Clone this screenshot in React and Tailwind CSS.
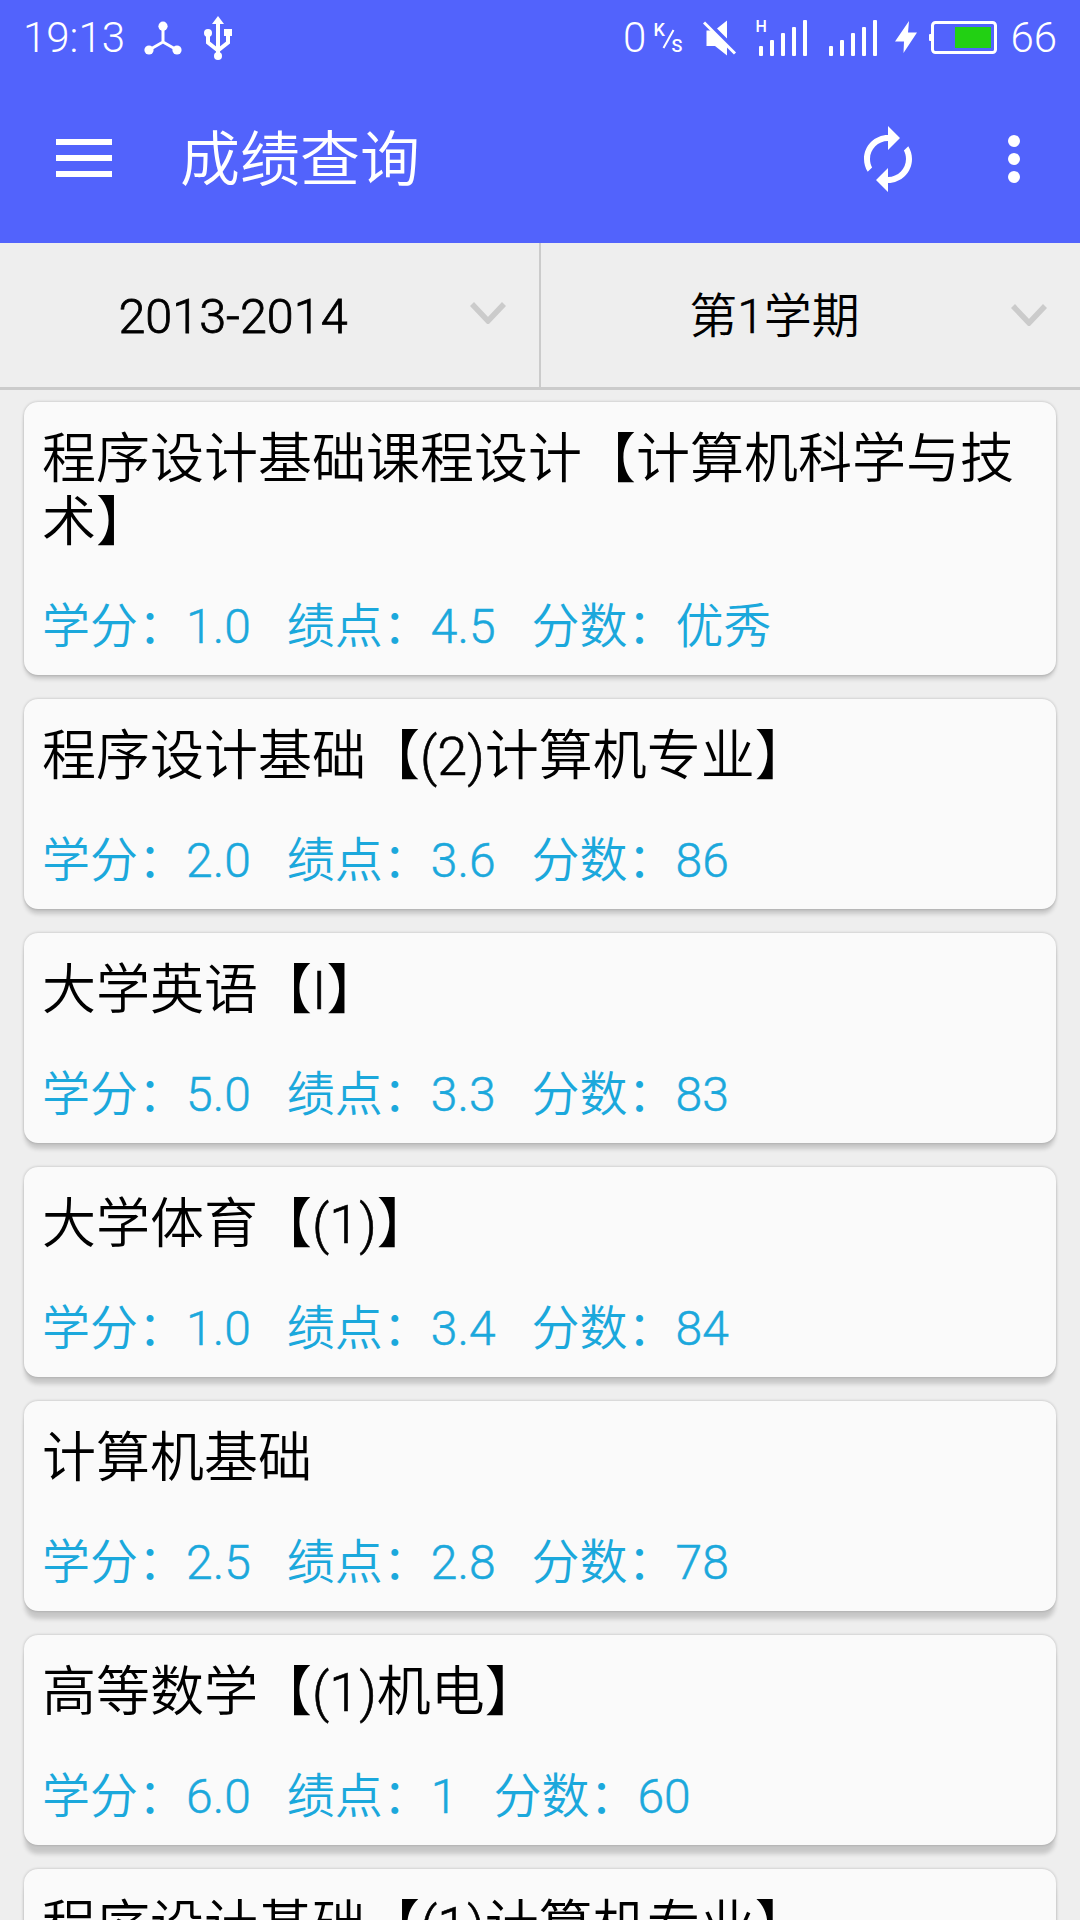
const courses = [
  { name: '程序设计基础课程设计【计算机科学与技术】', credit: '1.0', point: '4.5', score: '优秀' },
  { name: '程序设计基础【(2)计算机专业】', credit: '2.0', point: '3.6', score: '86' },
  { name: '大学英语【I】', credit: '5.0', point: '3.3', score: '83' },
  { name: '大学体育【(1)】', credit: '1.0', point: '3.4', score: '84' },
  { name: '计算机基础', credit: '2.5', point: '2.8', score: '78' },
  { name: '高等数学【(1)机电】', credit: '6.0', point: '1', score: '60' },
  { name: '程序设计基础【(1)计算机专业】' },
];

function Molecule() {
  return (
    <svg className="ml-[22px] h-[34px] w-[38px]" viewBox="0 0 38 34" fill="white">
      <path d="M19 5v16L5 29M19 21l14 8" fill="none" stroke="white" strokeWidth="3" />
      <circle cx="19" cy="5.2" r="4.6" />
      <circle cx="5" cy="29" r="4.6" />
      <circle cx="33" cy="29" r="4.6" />
    </svg>
  );
}

function Usb() {
  return (
    <svg className="ml-[22px] h-[44px] w-[28px]" viewBox="0 0 28 44" fill="white">
      <path d="M14 0l6 8H8z" />
      <path d="M14 6v32M4 17v9.500l10 8M24 17v9.500l-10 8" fill="none" stroke="white" strokeWidth="4" />
      <circle cx="4" cy="17" r="4" />
      <rect x="20" y="13" width="8" height="7" />
      <circle cx="14" cy="40" r="4" />
    </svg>
  );
}

function Muted() {
  return (
    <svg className="ml-[20px] h-[36px] w-[34px]" viewBox="0 0 34 36" fill="white">
      <path d="M3.500 10.500h5.500L24 25.500V35.500L12 26H3.500V10.500zM14 8.500L24 0.500V18.500z" />
      <path d="M1 2.500L32 33.500" stroke="white" strokeWidth="3" />
    </svg>
  );
}

function Signal({ className }) {
  return (
    <svg className={className} viewBox="0 0 48 36" fill="white">
      <rect x="0" y="26" width="4" height="10" rx="1" />
      <rect x="11" y="20" width="4" height="16" rx="1" />
      <rect x="22" y="13" width="4" height="23" rx="1" />
      <rect x="33" y="7" width="4" height="29" rx="1" />
      <rect x="44" y="0" width="4" height="36" rx="1" />
    </svg>
  );
}

function StatusBar() {
  return (
    <div className="flex h-[75px] items-center pl-[23px] pr-[23px] text-[42px] font-light leading-none">
      <span className="w-[99px] whitespace-nowrap">19:13</span>
      <Molecule />
      <Usb />
      <span className="ml-auto">0</span>
      <div className="relative ml-[7px] h-[36px] w-[30px] text-[18px] font-medium leading-none">
        <span className="absolute left-0 top-[1px]">K</span>
        <svg className="absolute left-[9px] top-[9px] h-[20px] w-[13px]" viewBox="0 0 13 20">
          <path d="M1.500 19L11.500 1" stroke="white" strokeWidth="2" />
        </svg>
        <span className="absolute left-[18px] top-[17px]">S</span>
      </div>
      <Muted />
      <div className="relative ml-[22px] h-[36px] w-[48px]">
        <span className="absolute -left-[4px] -top-[1px] text-[16px] font-medium leading-none">H</span>
        <Signal className="h-[36px] w-[48px]" />
      </div>
      <Signal className="ml-[22px] h-[36px] w-[48px]" />
      <svg className="ml-[18px] h-[33px] w-[22px]" viewBox="0 0 22 33" fill="white">
        <path d="M14 0L0 20.500h9L8.500 32 22 11.500h-9z" />
      </svg>
      <svg className="ml-[12px] h-[34px] w-[68px]" viewBox="0 0 68 34">
        <rect x="3.500" y="1.500" width="63" height="30" rx="3" fill="none" stroke="white" strokeWidth="3" />
        <rect x="0" y="13" width="3" height="7" rx="1" fill="white" />
        <rect x="26" y="6" width="36" height="21" fill="#22d013" />
      </svg>
      <span className="ml-[13px]">66</span>
    </div>
  );
}

function AppBar() {
  return (
    <div className="flex h-[168px] items-center pl-[56px] pr-[30px]">
      <div className="mb-[2px] flex w-[56px] flex-col gap-[10px]">
        <i className="h-[6px] bg-white" />
        <i className="h-[6px] bg-white" />
        <i className="h-[6px] bg-white" />
      </div>
      <h1 className="ml-[68px] flex-1 pt-[3px] text-[60px] font-[350] leading-[70px]">成绩查询</h1>
      <svg className="size-[72px]" viewBox="0 0 24 24" fill="white">
        <path d="M12 6v3l4-4-4-4v3c-4.420 0-8 3.580-8 8 0 1.570.46 3.030 1.240 4.260L6.700 14.800c-.45-.83-.7-1.790-.7-2.800 0-3.310 2.690-6 6-6zm6.760 1.740L17.300 9.200c.44.84.7 1.790.7 2.800 0 3.310-2.690 6-6 6v-3l-4 4 4 4v-3c4.420 0 8-3.580 8-8 0-1.570-.46-3.030-1.240-4.260z" />
      </svg>
      <svg className="ml-[54px] size-[72px]" viewBox="0 0 24 24" fill="white">
        <circle cx="12" cy="6" r="2" />
        <circle cx="12" cy="12" r="2" />
        <circle cx="12" cy="18" r="2" />
      </svg>
    </div>
  );
}

function Chevron({ className }) {
  return (
    <svg className={className} viewBox="0 0 36 22">
      <path d="M2 2l16 17L34 2" fill="none" stroke="#cbcbcb" strokeWidth="5.500" />
    </svg>
  );
}

function Filters() {
  return (
    <div className="flex h-[147px] border-b-[3px] border-[#cbcbcb] text-[48px] font-[350] leading-[56px] text-black">
      <div className="flex w-[541px] items-center border-r-2 border-[#cbcbcb] pr-[33px]">
        <span className="flex-1 pr-[4px] pt-[3px] text-center text-[48.5px] [-webkit-text-stroke:0.8px]">2013-2014</span>
        <Chevron className="mb-[4px] h-[22px] w-[36px]" />
      </div>
      <div className="flex flex-1 items-center pr-[33px]">
        <span className="flex-1 pr-[3px] pt-[3px] text-center">
          第<span className="[-webkit-text-stroke:0.6px]">1</span>学期
        </span>
        <Chevron className="h-[22px] w-[36px]" />
      </div>
    </div>
  );
}

function Stat({ label, value }) {
  const numeric = /^[\d.]+$/.test(value);
  return (
    <span>
      {label}：<span className={numeric ? '[-webkit-text-stroke:0.5px]' : ''}>{value}</span>
    </span>
  );
}

function CourseCard({ course, index }) {
  const drop = 5 + index;
  return (
    <li
      className="shrink-0 rounded-[14px] bg-[#fafafa] px-[18px] pb-[20px] pt-[26px]"
      style={{ boxShadow: `0 ${drop}px 4px -1px rgba(0,0,0,0.16), 0 0 3px rgba(0,0,0,0.24)` }}
    >
      <h2 className="text-[54px] font-[350] leading-[63px] text-black">
        {course.name.split(/([()\dI]+)/).map((part, i) => (
          <span key={i} className={i % 2 ? '[-webkit-text-stroke:0.6px]' : ''}>{part}</span>
        ))}
      </h2>
      {course.credit && (
        <div className="mt-[45px] flex gap-[36px] whitespace-pre text-[48px] font-[350] leading-[56px] text-[#1ba8dc]">
          <Stat label="学分" value={course.credit} />
          <Stat label="绩点" value={course.point} />
          <Stat label="分数" value={course.score} />
        </div>
      )}
    </li>
  );
}

export default function App() {
  return (
    <div className="flex h-[1920px] w-[1080px] flex-col overflow-hidden bg-[#eeeeee] font-['Roboto','Noto_Sans_CJK_SC',sans-serif]">
      <header className="bg-[#5263fc] text-white">
        <StatusBar />
        <AppBar />
      </header>
      <Filters />
      <ul className="flex flex-1 flex-col gap-[24px] overflow-hidden px-[24px] pt-[12px]">
        {courses.map((course, index) => (
          <CourseCard key={course.name} course={course} index={index} />
        ))}
      </ul>
    </div>
  );
}
